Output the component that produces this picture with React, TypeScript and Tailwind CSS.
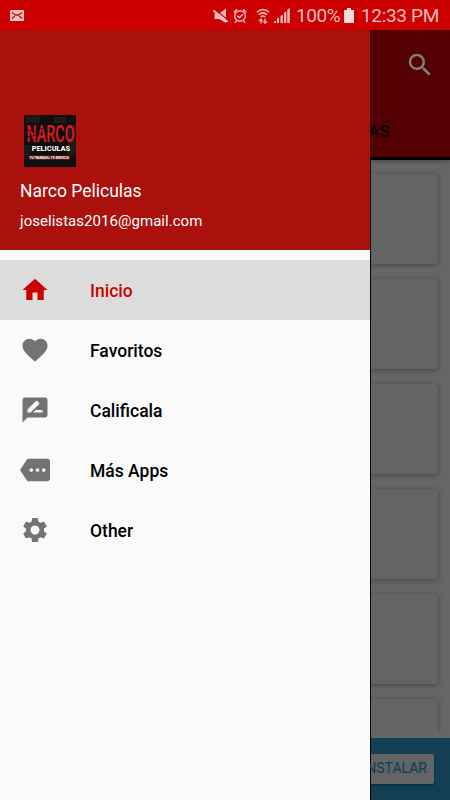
import React from 'react';
import { MdFavorite, MdHome, MdMore, MdRateReview, MdSearch, MdSettings } from 'react-icons/md';
import type { IconType } from 'react-icons';

interface MenuItem {
  label: string;
  icon: IconType;
  active?: boolean;
}

const menuItems: MenuItem[] = [
  { label: 'Inicio', icon: MdHome, active: true },
  { label: 'Favoritos', icon: MdFavorite },
  { label: 'Calificala', icon: MdRateReview },
  { label: 'Más Apps', icon: MdMore },
  { label: 'Other', icon: MdSettings },
];

const StatusBar: React.FC = () => (
  <header className="flex h-[30px] shrink-0 items-center bg-[#cc0000] pt-px text-[#f5bcbc]">
    <svg className="ml-[10px] h-[11px] w-[14px]" viewBox="0 0 14 11">
      <rect width="14" height="11" rx="0.5" fill="#f7c4c4" />
      <path d="M2 2.500l3.500 2.500h3L12 2.500M2 8.500L5 6M12 8.500L9 6" fill="none" stroke="#cc0000" strokeWidth="1.3" />
    </svg>
    {/* sin sonido */}
    <svg className="ml-[189px] h-4 w-[15px]" viewBox="0 0 15 16">
      <path d="M1.500 5.500H6L13 0.500V15L6 11H1.500z" fill="currentColor" />
      <path d="M2.500 2L15 12" stroke="#cc0000" strokeWidth="1.300" />
      <path d="M0.500 2.500L14.500 13.800" stroke="currentColor" strokeWidth="2" />
    </svg>
    {/* alarma */}
    <svg className="ml-[5px] h-4 w-[14px]" viewBox="0 0 14 16" fill="none" stroke="currentColor" strokeWidth="1.400">
      <circle cx="7" cy="8" r="5.300" />
      <path d="M0.700 4.500L4 1.200M13.300 4.500L10 1.200M3.500 12.500L2 15M10.500 12.500L12 15M4.300 7.800L6.500 9.800l3.200-3.500" />
    </svg>
    {/* wifi */}
    <svg className="ml-[9px] h-4 w-[14px]" viewBox="0 0 14 16" fill="none" stroke="currentColor" strokeWidth="1.500">
      <path d="M0.800 4.200q6.200-5.500 12.400 0M2.800 6.700q4.200-3.700 8.400 0M4.800 9q2.200-2 4.400 0" />
      <path d="M5 15.500v-4.500M3 13l2-2 1.500 2M9 10.500v4.500M7.300 13.300l1.700 2 1.800-2" strokeWidth="1.300" />
    </svg>
    {/* cobertura */}
    <svg className="ml-[4px] h-4 w-[16px]" viewBox="0 0 16 16" fill="currentColor">
      <path d="M0 15v-1.500l2-1V15zM3 15v-4.200l2-1.300V15zM6.500 15V8l2.300-1.500V15zM10 15V5l2.300-1.800V15zM13.300 15V1.800L15.800 0v15z" />
    </svg>
    <span className="ml-[6px] w-[45px] whitespace-nowrap pt-px text-[19px] tracking-[-0.4px]">100%</span>
    <svg className="ml-[3px] h-[15px] w-[10px]" viewBox="0 0 10 15" fill="#fadada">
      <path d="M3 0h4v2h3v13H0V2h3z" />
    </svg>
    <span className="ml-[7px] whitespace-nowrap pt-px text-[19px] tracking-[-0.32px]">12:33 PM</span>
  </header>
);

const AppLogo: React.FC = () => (
  <svg className="ml-1 block h-[52px] w-[52px]" viewBox="0 0 52 52">
    <rect width="52" height="52" fill="#100d0d" />
    <path d="M2 0h14v8H2zM30 2h12v6H30zM44 10h8v30h-8zM0 30h6v14H0z" fill="#1e1a19" />
    <g fontFamily="Roboto, sans-serif">
      <text x="2.500" y="27" fontSize="23.500" fontWeight="500" fill="#e01a22" textLength="48" lengthAdjust="spacingAndGlyphs">
        NARCO
      </text>
      <path d="M3 15l12 2M3 22l14 -3M16 13l8 3M6 26l8-3" stroke="#3a0b0d" strokeWidth="1" />
      <text x="7.700" y="36" fontSize="7.800" fontWeight="900" fill="#f2f2f2" textLength="38.500" lengthAdjust="spacingAndGlyphs">
        PELICULAS
      </text>
      <rect x="5" y="40.500" width="41" height="4.500" fill="#571012" />
      <text x="5.500" y="44.300" fontSize="4.300" fontWeight="900" fill="#ffffff" textLength="40" lengthAdjust="spacingAndGlyphs">
        TU TRANQUILL TU SERVICIO.
      </text>
    </g>
  </svg>
);

const Backdrop: React.FC = () => (
  <div className="flex w-20 flex-col overflow-hidden bg-[#666666]">
    <div className="flex h-[130px] shrink-0 flex-col justify-between border-b-[3px] border-l border-b-black border-l-[#2c0000] bg-[#520000] shadow-[0_1px_4px_#444444]">
      <div className="flex justify-end pr-[15px] pt-5">
        <MdSearch size={30} className="text-[#848080]" />
      </div>
      <span className="-ml-[3px] pb-[13px] text-[17px] font-medium text-black">AS</span>
    </div>
    <div className="flex h-[571px] shrink-0 flex-col gap-[15px] overflow-hidden border-l border-black pr-3 pt-[14px]">
      {[0, 1, 2, 3, 4, 5].map(i => (
        <div key={i} className="h-[90px] shrink-0 rounded-r-[4px] bg-[#646464] shadow-[0_1px_4px_1px_#4c4c4c]" />
      ))}
    </div>
    <div className="h-[7px] shrink-0 border-l border-black" />
    <div className="h-[62px] shrink-0 border-l border-black bg-[#123f54] pt-4">
      <div className="flex h-[30px] w-[63px] items-center justify-end rounded-r-[2px] bg-[#646464] pb-px pr-[7px] text-[14px] text-[#0f435b] shadow-[0_1px_2px_#0a2733]">
        <span className="[-webkit-text-stroke:0.2px_#0f435b]">INSTALAR</span>
      </div>
    </div>
  </div>
);

export default function App() {
  return (
    <div className="flex h-[800px] w-[450px] flex-col overflow-hidden font-['Roboto',sans-serif]">
      <StatusBar />
      <div className="flex min-h-0 flex-1">
        <aside className="w-[370px] shrink-0 bg-[#fafafa]">
          <div className="h-[220px] bg-[#aa100c] pl-5 pt-[85px] text-white">
            <AppLogo />
            <p className="mt-[12px] text-[17.5px] leading-6">Narco Peliculas</p>
            <p className="mt-[8px] text-[15px] leading-5 tracking-[0.04px]">joselistas2016@gmail.com</p>
          </div>
          <nav className="pt-[10px]">
            {menuItems.map(({ label, icon: Icon, active }) => (
              <div
                key={label}
                className={`flex h-[60px] items-center pl-5 ${active ? 'bg-[#dcdcdc] text-[#cc0000]' : 'text-black'}`}
              >
                <Icon size={30} className={active ? 'text-[#cc0000]' : 'text-[#737373]'} />
                <span className="ml-10 pt-0.5 text-[17.5px] font-medium">{label}</span>
              </div>
            ))}
          </nav>
        </aside>
        <Backdrop />
      </div>
    </div>
  );
}
